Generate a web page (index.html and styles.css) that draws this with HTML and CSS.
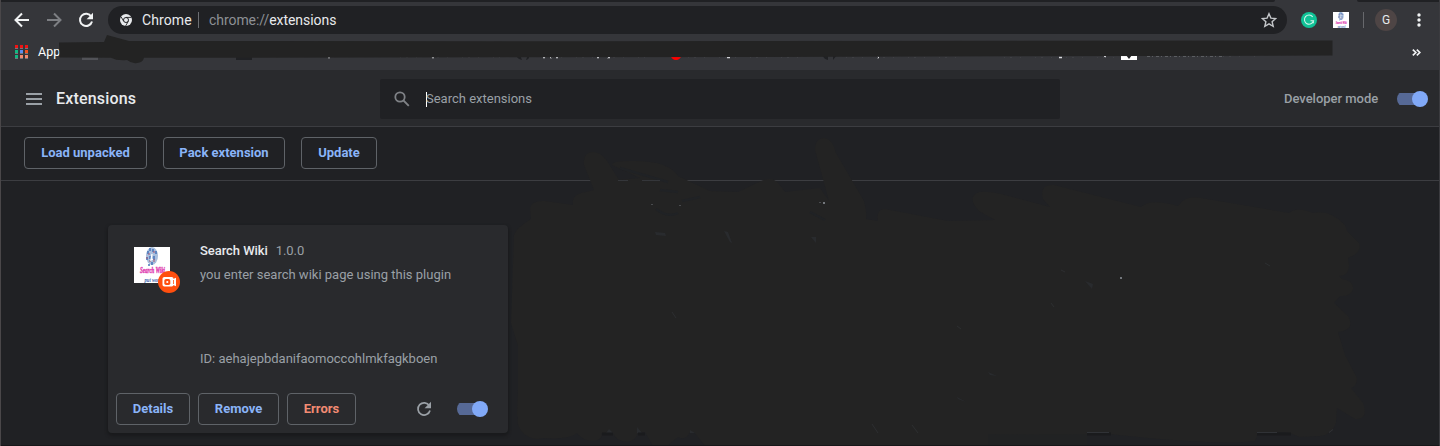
FILE: index.html
```html
<!DOCTYPE html>
<html lang="en">
<head>
<meta charset="utf-8">
<title>Extensions</title>
<link rel="stylesheet" href="styles.css">
</head>
<body>
<div class="window">
  <div class="tabstrip"><i class="tabs-left"></i><i class="tabs-right"></i></div>
  <div class="toolbar">
    <svg class="nav-icon back" viewBox="0 0 16 16"><path d="M15 8H2M8 1.500 1.500 8 8 14.500"/></svg>
    <svg class="nav-icon forward" viewBox="0 0 16 16"><path d="M1 8h13M8 1.500 14.500 8 8 14.500"/></svg>
    <svg class="nav-icon reload" viewBox="0 0 16 16"><path d="M13.300 4.700A6.100 6.100 0 1 0 14 9.500"/><path class="solid" d="M15 .8v6.400H8.600z"/></svg>
    <div class="omnibox">
      <svg class="chrome-logo" viewBox="0 0 12 12"><circle cx="6" cy="6" r="6" fill="#e8eaed"/><circle cx="6" cy="6" r="2.500" fill="#e8eaed" stroke="#202124" stroke-width="1"/><path d="M6 3.400h5.400M3.700 7.300 1.100 2.800M8.300 7.300 5.600 12" stroke="#202124" stroke-width=".9"/></svg>
      <span class="site">Chrome</span>
      <span class="url"><span class="scheme">chrome://</span>extensions</span>
      <svg class="star" viewBox="0 0 16 16"><path d="m8 1.700 1.900 4.400 4.800.4-3.600 3.200 1.100 4.700L8 11.900l-4.200 2.500 1.100-4.700L1.300 6.500l4.800-.4z"/></svg>
    </div>
    <svg class="grammarly" viewBox="0 0 16 16"><circle cx="8" cy="8" r="8" fill="#10c296"/><path d="M11.700 4.800A4.600 4.600 0 1 0 12.500 8.800H9.500M12.300 8.600v2.600" fill="none" stroke="#d5f5ec" stroke-width="1.100"/></svg>
    <svg class="mini-logo" viewBox="0 0 36 36"><use href="#wiki"/></svg>
    <i class="divider"></i>
    <span class="avatar">G</span>
    <svg class="dots" viewBox="0 0 4 14"><circle cx="2" cy="2" r="1.700"/><circle cx="2" cy="7" r="1.700"/><circle cx="2" cy="12" r="1.700"/></svg>
  </div>
  <div class="bookmarks">
    <svg class="apps" viewBox="0 0 13 14"><g fill="#f01414"><path d="M0 0h3v3H0zM5 0h3v3H5zM10 0h3v3h-3z"/></g><path fill="#10b981" d="M0 5h3v3H0zM0 10h3v3H0z"/><path fill="#5b8def" d="M5 5h3v3H5z"/><path fill="#f4511e" d="M10 5h3v3h-3z"/><path fill="#f28b70" d="M5 10h3v3H5zM10 10h3v3h-3z"/><path stroke="#85878b" stroke-width=".8" d="M0 3.500h3m2 0h3m2 0h3M0 8.500h3m2 0h3m2 0h3M0 13.500h3m2 0h3m2 0h3"/></svg>
    <span class="apps-label">App</span>
    <svg class="more" viewBox="0 0 9 7"><path d="m.8.700 3 2.800-3 2.800M4.800.700l3 2.800-3 2.800"/></svg>
  </div>
  <header class="header">
    <div class="menu"><i></i><i></i><i></i></div>
    <h1 class="title">Extensions</h1>
    <div class="search">
      <svg class="search-icon" viewBox="0 0 16 16"><circle cx="6" cy="6" r="4.700"/><path d="m9.500 9.500 5.300 5.300"/></svg>
      <i class="caret"></i><span class="placeholder">Search extensions</span>
    </div>
    <span class="dev-label">Developer mode</span>
    <div class="toggle"><i></i></div>
  </header>
  <div class="dev-tools">
    <button class="btn load">Load unpacked</button>
    <button class="btn pack">Pack extension</button>
    <button class="btn update">Update</button>
  </div>
  <main class="content">
    <section class="card">
      <div class="card-info">
        <div class="icon-wrap">
          <svg class="wiki-logo" viewBox="0 0 36 36">
            <g id="wiki"><path fill="#fff" d="M0 0h36v36H0z"/><ellipse cx="18" cy="9" rx="6" ry="9" fill="#a9bfdd"/><path d="M14 4v3m2-6v3m3-2v3m-6 5v3m3-4v3m4-3v4m2-9v3m-4 8v3m-3-1v2" stroke="#4574b8" stroke-width="1.500" fill="none"/><path d="M15 6v2m5 4v3m-4-2v2m4-11v2m-7 4v2" stroke="#a8607c" stroke-width="1.100"/><path d="m18 7-1 6 2-1" stroke="#fff" stroke-width="1.300" fill="none"/><text x="6" y="26" textLength="25" lengthAdjust="spacingAndGlyphs" class="logo-name">Search Wiki</text><text x="10.500" y="35" textLength="17" lengthAdjust="spacingAndGlyphs" class="logo-tag">put word</text></g>
          </svg>
          <svg class="badge" viewBox="0 0 22 22"><circle cx="11" cy="11" r="11" fill="#ff4f0f"/><rect x="4.500" y="6" width="11" height="9.500" rx="1.800" fill="#fff"/><path d="m14 8.500 4-1.800v8.600l-4-1.800z" fill="#fff"/><path d="M15.500 9v4" stroke="#ff4f0f" stroke-width=".8"/><rect x="6.300" y="8" width="6" height="6" rx="1.700" fill="#ff4f0f"/><circle cx="9.300" cy="11" r="1.100" fill="#fff"/></svg>
        </div>
        <div class="details">
          <div class="name-row"><span class="name">Search Wiki</span><span class="version">1.0.0</span></div>
          <p class="description">you enter search wiki page using this plugin</p>
          <p class="ext-id">ID: aehajepbdanifaomoccohlmkfagkboen</p>
        </div>
      </div>
      <div class="card-actions">
        <button class="btn det">Details</button>
        <button class="btn rem">Remove</button>
        <button class="btn err">Errors</button>
        <svg class="nav-icon refresh" viewBox="0 0 16 16"><path d="M13.300 4.700A6.100 6.100 0 1 0 14 9.500"/><path class="solid" d="M15 .8v6.400H8.600z"/></svg>
        <div class="toggle"><i></i></div>
      </div>
    </section>
  </main>
  <!-- Hand-painted redaction over the bookmarks and neighbouring cards -->
  <svg class="redaction" viewBox="0 0 1440 446">
    <path fill="#515257" d="M82 56h16v4H82z"/>
    <path fill="#202124" d="M236 55h16v5h-16zM516 55h4l2 5q-5-1-6-5zm12 0-2 5q4-1 3-5zM823 55h5v5q-5-1-5-5zm10 0h4l-4 5z"/>
    <path fill="red" d="M670 55h12q-2 5-6 5t-6-5z"/>
    <path fill="#fff" d="M1121 55h16v5h-16z"/><path fill="#202124" d="m1126 55 3 4 3-4z"/>
    <path stroke="#d9dade" stroke-width="1.300" d="M328 57.500h2M432 57.500h2M543 57.500h2m5 0h2m4 0h2m39 0h2m8 0h3m117 0h3m147 0h2m180 0h3m42-1h2"/>
    <path stroke="#5c5e62" stroke-width="1" stroke-dasharray="3 2 1 3" d="M1147 56.500h76"/>
    <path stroke="#3f4044" stroke-dasharray="1 5 2 8 1 14" d="M400 57.500h100m45 0h100m43 0h110m48 0h110m48 0h120M1223 56.500h36"/>
    <path fill="#232323" d="m59 42.500 45-.5 3-7 22 6 460 .3L1332.500 40.500v15L760 57l-616 .8q-1 5-7 5.200-5 1-10-3-10 1-16-2.300L59.500 57.500z"/>
    <path fill="#232323" d="M517 415 518 390 518 346 511 323 514 235Q516 228 531 219L530 208Q532 200 545 201L573 205Q571 194 586 192L594 190 584 165Q582 152 594 152 602 153 607 161L619 180 640 178 612 165Q612 161 630 161 668 160 678 176L710 191 738 192 759 182Q772 175 779 184L785 192 820 188 829 201 815 150Q815 138 825 138 833 140 836 153L864 201Q867 214 866 219L878 221Q876 209 885 209L948 221 995 220 979 211Q966 197 979 192 988 191 1001 194L1050 207 1043 199Q1039 184 1054 185L1141 207Q1149 198 1178 206 1185 195 1201 198L1289 213Q1297 206 1313 213 1330 209 1345 225L1347 231 1359 243Q1363 252 1348 258L1349 265Q1349 276 1339 276L1342 279Q1354 281 1353 289 1351 297 1340 296L1334 303 1348 316Q1356 330 1338 332L1345 355 1357 378Q1357 386 1351 388L1363 403Q1369 420 1355 419L1337 408 1336 423Q1332 435 1320 436L1300 437 1287 432 1258 433 1255 441Q1220 446 1109 434L1087 433V446H705L694 432H690Q686 441 678 437L667 446H653L645 432H638Q636 441 627 442 616 441 613 433H602Q602 441 592 441 582 440 577 433 570 440 542 438 534 441 524 434 516 426 518 418z"/>
    <path fill="#202124" d="M988 434v11h99v-11q-40 1-97 0z" opacity=".35"/>
    <path fill="none" stroke="#202225" stroke-width="2.500" d="m620 168 48 14m-8 8 18 2m-22 17q12 9 22 4m132-1 15 8m-143-19 18-4"/>
    <path stroke="#34363a" d="M618 180.500h10m14 0h18"/>
    <path fill="#292b2e" d="m655 232 10 1 1 3-10-1zm69-1 4 1 4 11-2-1zm87 6h5v6zm274 44 8 3-1 5zm-97 91 9 4-7-1zm-31 25 9 5-8-3zM609 429l4 4h-7zm28-2 5 6h-5zm53 3 5 3h-5z"/>
    <path stroke="#313336" stroke-width=".7" d="m672 312 4 6m196 106 6 9m34-8 6 8m39-107 4 3m90-26 3 4m7-37 4 2m200-9 5 3"/>
    <path fill="#73777c" d="M823 202h2v2h-2zM1120 277h2v2h-2z"/>
    <path fill="#494b4e" d="M651 204h2v1h-2zM679 205h2v1h-2zM819 202h2v1h-2z"/>
    <path stroke="#1a1b1d" stroke-width="3" d="M602 434h11m25 0h7m442 0h24m146 0h34"/>
    <path fill="none" stroke="#303236" d="M1087 432.500h22m148 0h20m52 0 4-3"/>
  </svg>
  <i class="bottom-edge"></i>
</div>
</body>
</html>
```
FILE: styles.css
```css
* { box-sizing: border-box; }
body { margin: 0; background: #202124; }
.window {
  position: relative;
  width: 1440px;
  height: 446px;
  overflow: hidden;
  display: flex;
  flex-direction: column;
  background: #202124;
  color: #e8eaed;
  font: 13px/20px Roboto, "Liberation Sans", sans-serif;
}
.window::before, .window::after {
  content: "";
  position: absolute;
  z-index: 2;
  top: 0;
  bottom: 0;
  width: 1px;
  background: #4a4749;
}
.window::before { left: 0; }
.window::after { right: 0; background: #3b3b3f; }
svg { flex: none; display: block; }
.tabstrip { height: 2px; flex: none; display: flex; justify-content: space-between; background: #35363a; }
.tabs-left { width: 1275px; background: #202124; border-bottom-right-radius: 2px; }
.tabs-right { width: 83px; background: #202124; border-bottom-left-radius: 2px; }
.toolbar { height: 36px; flex: none; display: flex; align-items: center; padding-left: 14px; background: #35363a; }
.nav-icon { width: 16px; height: 16px; fill: none; stroke: #f1f3f4; stroke-width: 2; }
.nav-icon .solid { fill: #f1f3f4; stroke: none; }
.forward { margin-left: 16px; stroke: #7d7f83; }
.reload { margin-left: 16px; }
.omnibox {
  width: 1179px;
  height: 28px;
  margin-left: 14px;
  padding: 0 10px 0 12px;
  display: flex;
  align-items: center;
  border-radius: 14px;
  background: #202124;
  font-size: 14px;
}
.chrome-logo { width: 12px; height: 12px; }
.site { width: 57px; margin-left: 10px; padding-right: 7px; border-right: 1px solid #6c6e72; line-height: 16px; letter-spacing: .1px; }
.url { margin-left: 10px; letter-spacing: -.06px; }
.scheme { color: #8d9095; }
.star { width: 16px; height: 16px; margin-left: auto; fill: none; stroke: #c4c7ca; stroke-width: 1.4; }
.grammarly { width: 16px; height: 16px; margin-left: 14px; }
.mini-logo { width: 16px; height: 16px; margin-left: 16px; }
.divider { width: 1px; height: 16px; margin-left: 14px; background: #67686c; }
.avatar { width: 22px; height: 22px; margin-left: 11px; border-radius: 50%; background: #4e4545; text-align: center; font-size: 12px; line-height: 22px; }
.dots { width: 4px; height: 14px; margin-left: 20px; fill: #f1f3f4; }
.bookmarks { height: 32px; flex: none; display: flex; align-items: center; padding: 0 19px 4px 15px; background: #35363a; }
.apps { width: 13px; height: 14px; }
.apps-label { margin-left: 10px; font-size: 12.500px; color: #fff; }
.more { width: 9px; height: 7px; margin-left: auto; fill: none; stroke: #f1f3f4; stroke-width: 1.7; }
.header { height: 57px; flex: none; display: flex; align-items: center; padding: 2px 0 0 26px; background: #292a2d; border-bottom: 1px solid #3c3d41; }
.menu { width: 16px; display: grid; gap: 3px; }
.menu i { height: 2px; background: #9aa0a6; }
.title { width: 324px; margin: 0 0 0 14px; font-size: 16px; font-weight: 500; letter-spacing: .18px; }
.search { width: 680px; height: 40px; display: flex; align-items: center; padding-left: 14px; border-radius: 2px; background: #202124; color: #9aa0a6; }
.search-icon { width: 16px; height: 16px; fill: none; stroke: #7f8286; stroke-width: 1.8; }
.caret { width: 1px; height: 15px; margin: 0 -1px 0 16px; background: #fff; }
.placeholder { letter-spacing: 0; }
.dev-label { width: 113px; margin-left: 224px; font-weight: 500; color: #9aa0a6; letter-spacing: -.02px; }
.toggle { width: 31px; height: 16px; display: flex; align-items: center; justify-content: flex-end; background: linear-gradient(#566996, #566996) 0 50% / 28px 12px no-repeat; border-radius: 8px; }
.toggle i { width: 16px; height: 16px; border-radius: 50%; background: #81a9f7; }
.dev-tools { height: 54px; flex: none; display: flex; gap: 16px; align-items: flex-start; padding: 10px 24px; border-bottom: 1px solid #3c3d41; }
.btn { height: 32px; padding: 0; border: 1px solid #5f6368; border-radius: 4px; background: none; color: #8ab4f8; font: bold 13px/30px Roboto, sans-serif; }
.load { width: 123px; }
.pack { width: 122px; }
.update { width: 76px; }
.content { flex: 1; padding: 44px 0 0 108px; }
.card { width: 400px; height: 208px; display: flex; flex-direction: column; justify-content: space-between; border-radius: 4px; background: #292a2d; box-shadow: 0 2px 3px 1px #191a1c; }
.card-info { display: flex; padding: 22px 26px 0; }
.icon-wrap { position: relative; width: 36px; height: 36px; }
.wiki-logo { width: 36px; height: 36px; }
.logo-name { font: italic bold 8px "Liberation Serif", serif; fill: #e03ab0; stroke: #e03ab0; stroke-width: .4px; }
.logo-tag { font: italic bold 7px "Liberation Serif", serif; fill: #3c66ad; }
.badge { position: absolute; left: 24px; top: 24px; width: 22px; height: 22px; }
.details { margin: -6px 0 0 30px; color: #9aa0a6; }
.name-row { display: flex; gap: 8px; letter-spacing: -.06px; }
.name { font-weight: 500; color: #e8eaed; }
.description { margin: 4px 0 0; letter-spacing: 0; }
.ext-id { margin: 64px 0 0; letter-spacing: 0; }
.card-actions { display: flex; align-items: center; gap: 8px; padding: 0 20px 8px 8px; }
.det { width: 74px; }
.rem { width: 81px; }
.err { width: 69px; color: #f28b73; }
.refresh { margin: 0 17px 0 auto; stroke: #9aa0a6; stroke-width: 1.7; }
.refresh .solid { fill: #9aa0a6; }
.redaction { position: absolute; left: 0; top: 0; width: 1440px; height: 446px; }
.bottom-edge { position: absolute; left: 0; right: 0; bottom: 0; height: 1px; background: #171719; }
```
